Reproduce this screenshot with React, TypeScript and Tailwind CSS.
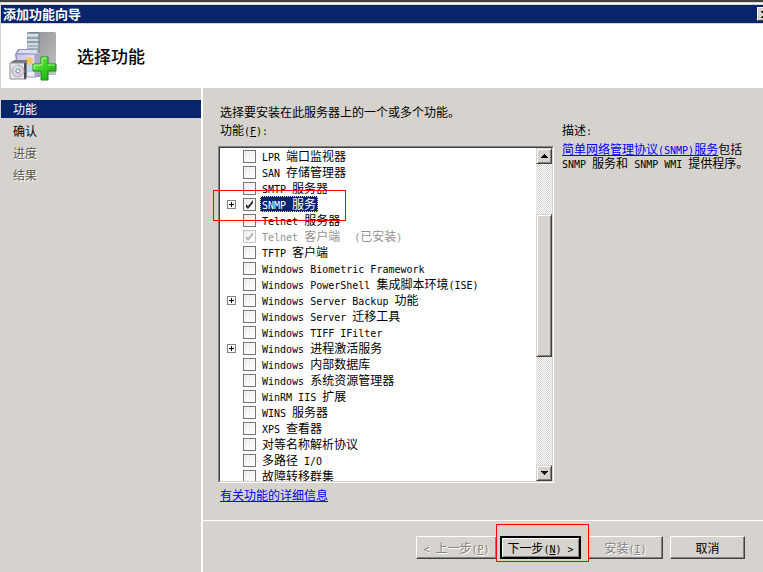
import React, { useState } from 'react';
import clsx from 'clsx';

interface Feature {
  name: string;
  expandable?: boolean;
  installed?: boolean;
}

const FEATURES: Feature[] = [
  { name: 'LPR 端口监视器' },
  { name: 'SAN 存储管理器' },
  { name: 'SMTP 服务器' },
  { name: 'SNMP 服务', expandable: true },
  { name: 'Telnet 服务器' },
  { name: 'Telnet 客户端', installed: true },
  { name: 'TFTP 客户端' },
  { name: 'Windows Biometric Framework' },
  { name: 'Windows PowerShell 集成脚本环境(ISE)' },
  { name: 'Windows Server Backup 功能', expandable: true },
  { name: 'Windows Server 迁移工具' },
  { name: 'Windows TIFF IFilter' },
  { name: 'Windows 进程激活服务', expandable: true },
  { name: 'Windows 内部数据库' },
  { name: 'Windows 系统资源管理器' },
  { name: 'WinRM IIS 扩展' },
  { name: 'WINS 服务器' },
  { name: 'XPS 查看器' },
  { name: '对等名称解析协议' },
  { name: '多路径 I/O' },
  { name: '故障转移群集' },
];

const STEPS = [
  { name: '功能', state: 'current' },
  { name: '确认', state: 'ready' },
  { name: '进度', state: 'pending' },
  { name: '结果', state: 'pending' },
];

const EMBOSSED = 'text-[#848284] [text-shadow:1px_1px_0_#fff]';

// Latin runs are half as wide as a Chinese character; hotkey is underlined
const Mixed: React.FC<{ text: string; hotkey?: string }> = ({ text, hotkey }) => (
  <>
    {text.split(/([\x20-\x7e]+)/).map((run, i) => {
      if (i % 2 === 0) return run;
      const at = hotkey ? run.indexOf(hotkey) : -1;
      return (
        <span key={i} className="font-['DejaVu_Sans_Mono',monospace] text-[10px] leading-none whitespace-pre-wrap">
          {at < 0 ? run : (
            <>
              {run.slice(0, at)}
              <u>{hotkey}</u>
              {run.slice(at + 1)}
            </>
          )}
        </span>
      );
    })}
  </>
);

const WizardIcon = () => (
  <svg width="48" height="50" viewBox="0 0 48 50" className="shrink-0" aria-hidden="true">
    <defs>
      <linearGradient id="tower" x1="0" y1="0" x2="1" y2="1">
        <stop offset="0" stopColor="#8b8e91" />
        <stop offset="0.5" stopColor="#a7a8aa" />
        <stop offset="1" stopColor="#c3c3c5" />
      </linearGradient>
      <linearGradient id="front" x1="0" y1="0" x2="0" y2="1">
        <stop offset="0" stopColor="#c9d7df" />
        <stop offset="1" stopColor="#8d9ba6" />
      </linearGradient>
      <linearGradient id="box" x1="0" y1="0" x2="1" y2="1">
        <stop offset="0" stopColor="#c3c3e8" />
        <stop offset="1" stopColor="#f5f6ff" />
      </linearGradient>
      <linearGradient id="plus" x1="0" y1="0" x2="1" y2="1">
        <stop offset="0" stopColor="#8af05c" />
        <stop offset="0.5" stopColor="#35cf20" />
        <stop offset="1" stopColor="#12a30c" />
      </linearGradient>
    </defs>
    <path d="M18 2 21 1H46L47 2V44H18Z" fill="url(#tower)" />
    <path d="M18 2H30V44H18Z" fill="url(#front)" />
    <path d="M18 2H30M18 7H30M18 11H30" stroke="#64717a" />
    <path d="M19 4H29M19 9H29M19 13H29M19 16H29" stroke="#e3edf2" />
    <path d="M19 15H29M19 18H29" stroke="#8fa0ab" />
    <path d="M30 2V30" stroke="#777c82" />
    <path d="M6 23 9 18H25L31 24V46H9Z" fill="#8f91b7" />
    <path d="M8 22 11 19H27L29 23Z" fill="#dedff4" />
    <path d="M7 23H26V46H10Z" fill="url(#box)" stroke="#9698c4" />
    <path d="M26 23 31 21V44L26 47Z" fill="#a5a6c9" />
    <circle cx="20" cy="30" r="4" fill="#f7c765" />
    <path d="M15 35C17 32 20 36 26 32V41H15Z" fill="#b9d7ef" />
    <path d="M2 31 5 29H18V46H2Z" fill="#777880" />
    <path d="M1 32H17V48H1Z" fill="#e9e9ed" stroke="#8d8d94" />
    <path d="M16 32V48" stroke="#4c4d55" strokeWidth="2" />
    <circle cx="9" cy="40" r="6" fill="#d6d5e1" stroke="#a6a6ae" />
    <path d="M9 40 5 36A6 6 0 0 1 9 34Z" fill="#c5e9e2" />
    <path d="M9 40 13 44A6 6 0 0 1 9 46Z" fill="#e4bfdb" />
    <circle cx="9" cy="40" r="2" fill="#fff" stroke="#85858e" />
    <path
      d="M32 26H39V33H47V40H39V49H32V40H24V33H32Z"
      fill="url(#plus)"
      stroke="#168a12"
      strokeLinejoin="round"
    />
    <path d="M33 34V27H38M25 38V34H33M39 34H46" fill="none" stroke="#b6f99d" />
  </svg>
);

const FeatureRow: React.FC<{
  feature: Feature;
  checked: boolean;
  selected: boolean;
  onToggle: () => void;
}> = ({ feature, checked, selected, onToggle }) => (
  <li className="flex h-4 shrink-0 items-center pl-[7px]">
    <span className="w-4 shrink-0">
      {feature.expandable && (
        <button aria-label={`展开 ${feature.name}`} className="block size-[9px] border border-[#848284] bg-white">
          <svg viewBox="0 0 7 7" className="size-[7px]" shapeRendering="crispEdges">
            <path d="M1 3H6V4H1ZM3 1H4V6H3Z" />
          </svg>
        </button>
      )}
    </span>
    <label className="flex items-center">
      <span className="grid size-[13px] shrink-0">
        <input
          type="checkbox"
          checked={checked}
          disabled={feature.installed}
          onChange={onToggle}
          className="col-start-1 row-start-1 size-[13px] appearance-none border border-[#737573] bg-linear-to-br from-[#efebf2] to-white disabled:border-[#c6c3c6]"
        />
        {checked && (
          <svg
            viewBox="0 0 13 13"
            className={clsx(
              'pointer-events-none col-start-1 row-start-1 size-[13px]',
              feature.installed ? 'text-[#b5b2b5]' : 'text-[#313031]'
            )}
          >
            <path d="M3 6 5 8 10 2V5L5 11 3 9Z" fill="currentColor" />
          </svg>
        )}
      </span>
      <span
        className={clsx(
          'ml-1 border px-px leading-[14px] whitespace-nowrap',
          selected ? 'border-dotted border-[#f7db94] bg-[#08246b] text-white' : 'border-transparent',
          feature.installed && 'text-[#949294]'
        )}
      >
        <Mixed text={feature.name} />
        {feature.installed && (
          <span className="ml-3.5">
            <Mixed text="(已安装)" />
          </span>
        )}
      </span>
    </label>
  </li>
);

const ScrollButton: React.FC<{ label: string; path: string }> = ({ label, path }) => (
  <button
    aria-label={label}
    className="flex h-4 w-4 shrink-0 items-center justify-center border border-t-[#d6d3ce] border-r-[#424142] border-b-[#424142] border-l-[#d6d3ce] bg-[#d6d3ce] shadow-[inset_1px_1px_#fff,inset_-1px_-1px_#848284]"
  >
    <svg viewBox="0 0 7 4" className="h-1 w-[7px]" shapeRendering="crispEdges">
      <path d={path} />
    </svg>
  </button>
);

const WizardButton: React.FC<{
  text: string;
  hotkey?: string;
  disabled?: boolean;
  primary?: boolean;
  className?: string;
}> = ({ text, hotkey, disabled, primary, className }) => (
  <button
    disabled={disabled}
    className={clsx(
      'h-[23px] bg-[#d6d3ce] leading-4 whitespace-nowrap',
      primary
        ? 'border-2 border-black shadow-[inset_1px_1px_#fff,inset_-1px_-1px_#848284]'
        : 'border border-t-white border-r-[#424142] border-b-[#424142] border-l-white shadow-[inset_-1px_-1px_#848284]',
      disabled && EMBOSSED,
      className
    )}
  >
    <Mixed text={text} hotkey={hotkey} />
  </button>
);

export default function App() {
  const [checked, setChecked] = useState<string[]>(['SNMP 服务', 'Telnet 客户端']);
  const [selected, setSelected] = useState('SNMP 服务');

  const toggle = (name: string) => {
    setSelected(name);
    setChecked((prev) => (prev.includes(name) ? prev.filter((n) => n !== name) : [...prev, name]));
  };

  return (
    <div className="flex h-screen flex-col overflow-hidden border-t-2 border-[#424142] bg-[#d6d3ce] pl-px font-['Noto_Sans_CJK_SC',sans-serif] text-[12px] text-black">
      {/* Title bar */}
      <div className="mt-px mb-px h-px shrink-0 bg-white" />
      <div className="flex h-[18px] shrink-0 items-center justify-between overflow-hidden bg-[#08246b] pl-0.5">
        <h1 className="text-[13px] leading-[18px] font-bold text-white">添加功能向导</h1>
        <button
          aria-label="关闭"
          className="-mr-2.5 flex h-3.5 w-4 items-center justify-center border border-t-white border-r-[#424142] border-b-[#424142] border-l-white bg-[#d6d3ce]"
        >
          <svg viewBox="0 0 8 7" className="h-[7px] w-2" shapeRendering="crispEdges">
            <path d="M0 0H2L4 2 6 0H8L5 3.5 8 7H6L4 5 2 7H0L3 3.5Z" />
          </svg>
        </button>
      </div>

      {/* Banner */}
      <header className="mt-px flex h-16 shrink-0 items-center gap-5 bg-white pl-2">
        <WizardIcon />
        <h2 className="text-[17px] leading-6 font-medium">选择功能</h2>
      </header>

      <div className="flex min-h-0 flex-1">
        {/* Wizard steps */}
        <nav className="w-[202px] shrink-0 border-r-2 border-white pt-3">
          <ol className="flex flex-col gap-1">
            {STEPS.map((step) => (
              <li
                key={step.name}
                aria-current={step.state === 'current' ? 'step' : undefined}
                className={clsx(
                  'h-[18px] pl-3 leading-[18px]',
                  step.state === 'current' && 'bg-[#08246b] text-white',
                  step.state === 'pending' && 'text-[#5a5949] [text-shadow:1px_1px_0_#fff]'
                )}
              >
                {step.name}
              </li>
            ))}
          </ol>
        </nav>

        <div className="flex min-w-0 flex-1 flex-col">
          <main className="flex min-h-0 flex-1 gap-2 pt-4 pr-2 pb-[17px] pl-[15px]">
            <section className="flex min-w-0 flex-1 flex-col">
              <p className="pl-0.5 leading-4 whitespace-nowrap">选择要安装在此服务器上的一个或多个功能。</p>
              <p id="features-label" className="mt-0.5 mb-2 h-4 pl-0.5 leading-4">
                <Mixed text="功能(F):" hotkey="F" />
              </p>

              <div className="relative flex min-h-0 flex-1 border border-t-[#848284] border-r-white border-b-white border-l-[#848284]">
                <div className="flex min-w-0 flex-1 border border-t-[#424142] border-r-[#d6d3ce] border-b-[#d6d3ce] border-l-[#424142] bg-white">
                  <ul aria-labelledby="features-label" className="flex min-w-0 flex-1 flex-col overflow-hidden">
                    {FEATURES.map((feature) => (
                      <FeatureRow
                        key={feature.name}
                        feature={feature}
                        checked={checked.includes(feature.name)}
                        selected={selected === feature.name}
                        onToggle={() => toggle(feature.name)}
                      />
                    ))}
                  </ul>
                  <div className="flex w-4 shrink-0 flex-col bg-[repeating-conic-gradient(#fff_0_25%,#d6d3ce_0_50%)] bg-size-[2px_2px]">
                    <ScrollButton label="向上滚动" path="M3 0H4V1H5V2H6V3H7V4H0V3H1V2H2V1H3Z" />
                    <div className="flex-1 basis-[50px]" />
                    <div className="h-[43%] border border-t-[#d6d3ce] border-r-[#424142] border-b-[#424142] border-l-[#d6d3ce] bg-[#d6d3ce] shadow-[inset_1px_1px_#fff,inset_-1px_-1px_#848284]" />
                    <div className="flex-1 basis-[108px]" />
                    <ScrollButton label="向下滚动" path="M0 0H7V1H6V2H5V3H4V4H3V3H2V2H1V1H0Z" />
                  </div>
                </div>
                {/* Highlight around the SNMP row */}
                <div className="pointer-events-none absolute top-[43px] -left-1.5 z-10 h-[31px] w-[133px] border border-[#ff0000]" />
              </div>

              <a href="#details" className="mt-1 self-start pl-0.5 leading-4 text-[#0000ff] underline">
                有关功能的详细信息
              </a>
            </section>

            <aside className="w-[193px] shrink-0 pt-[18px]">
              <h3 className="h-4 leading-4">
                <Mixed text="描述:" />
              </h3>
              <p className="mt-1 leading-[14px]">
                <a href="#snmp" className="text-[#0000ff] underline">
                  <Mixed text="简单网络管理协议(SNMP)服务" />
                </a>
                包括
                <Mixed text=" SNMP 服务和 SNMP WMI 提供程序。" />
              </p>
            </aside>
          </main>

          <footer className="flex h-[52px] shrink-0 items-start justify-end border-t border-white pt-[15px] pr-[18px]">
            <WizardButton text="< 上一步(P)" hotkey="P" disabled className="w-[81px]" />
            <div className="relative mr-[7px] ml-[3px] flex">
              <WizardButton text="下一步(N) >" hotkey="N" primary className="w-[81px]" />
              {/* Highlight around the next button */}
              <div className="pointer-events-none absolute -top-3 -left-1 h-[38px] w-[93px] border border-[#ff0000]" />
            </div>
            <WizardButton text="安装(I)" hotkey="I" disabled className="w-[75px]" />
            <WizardButton text="取消" className="ml-[7px] w-[75px]" />
          </footer>
        </div>
      </div>
    </div>
  );
}
